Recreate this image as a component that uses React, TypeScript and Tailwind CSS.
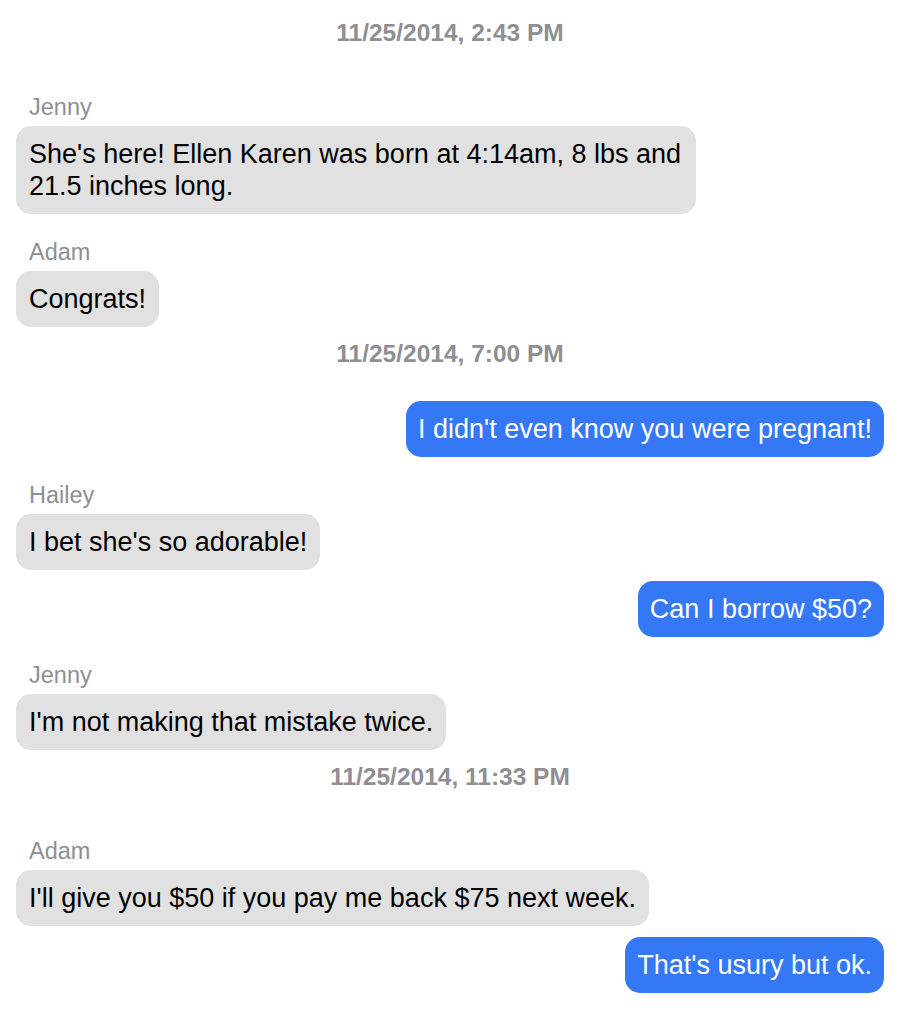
import React from "react";

type Item =
  | { kind: "ts"; text: string }
  | { kind: "msg"; from?: string; text: string; me?: boolean };

const items: Item[] = [
  { kind: "ts", text: "11/25/2014, 2:43 PM" },
  { kind: "msg", from: "Jenny", text: "She's here! Ellen Karen was born at 4:14am, 8 lbs and 21.5 inches long." },
  { kind: "msg", from: "Adam", text: "Congrats!" },
  { kind: "ts", text: "11/25/2014, 7:00 PM" },
  { kind: "msg", me: true, text: "I didn't even know you were pregnant!" },
  { kind: "msg", from: "Hailey", text: "I bet she's so adorable!" },
  { kind: "msg", me: true, text: "Can I borrow $50?" },
  { kind: "msg", from: "Jenny", text: "I'm not making that mistake twice." },
  { kind: "ts", text: "11/25/2014, 11:33 PM" },
  { kind: "msg", from: "Adam", text: "I'll give you $50 if you pay me back $75 next week." },
  { kind: "msg", me: true, text: "That's usury but ok." },
];

export default function App() {
  return (
    <div
      className="min-h-screen w-full bg-white pt-[19px] pl-4 pr-[14px]"
      style={{ fontFamily: '"Liberation Sans", Arial, sans-serif' }}
    >
      {items.map((it, i) => {
        if (it.kind === "ts") {
          return (
            <div
              key={i}
              className="mt-0 mb-[33px] text-center text-[24.5px] leading-[28px] font-bold text-[#8e8e93] [&:not(:first-child)]:mt-[13px]"
            >
              {it.text}
            </div>
          );
        }
        if (it.me) {
          return (
            <div key={i} className="mt-[11px] flex justify-end">
              <div className="max-w-[680px] rounded-[15px] bg-[#3478f6] px-[12px] py-[12px] text-[27px] leading-[32px] text-white">
                {it.text}
              </div>
            </div>
          );
        }
        return (
          <div key={i} className="mt-[11px] flex flex-col items-start">
            <div className="pt-[13px] mb-[5px] pl-[13px] text-[23.5px] leading-[28px] text-[#8e8e93]">
              {it.from}
            </div>
            <div className="max-w-[680px] rounded-[15px] bg-[#e1e1e1] px-[13px] py-[12px] text-[27px] leading-[32px] text-black">
              {it.text}
            </div>
          </div>
        );
      })}
    </div>
  );
}
